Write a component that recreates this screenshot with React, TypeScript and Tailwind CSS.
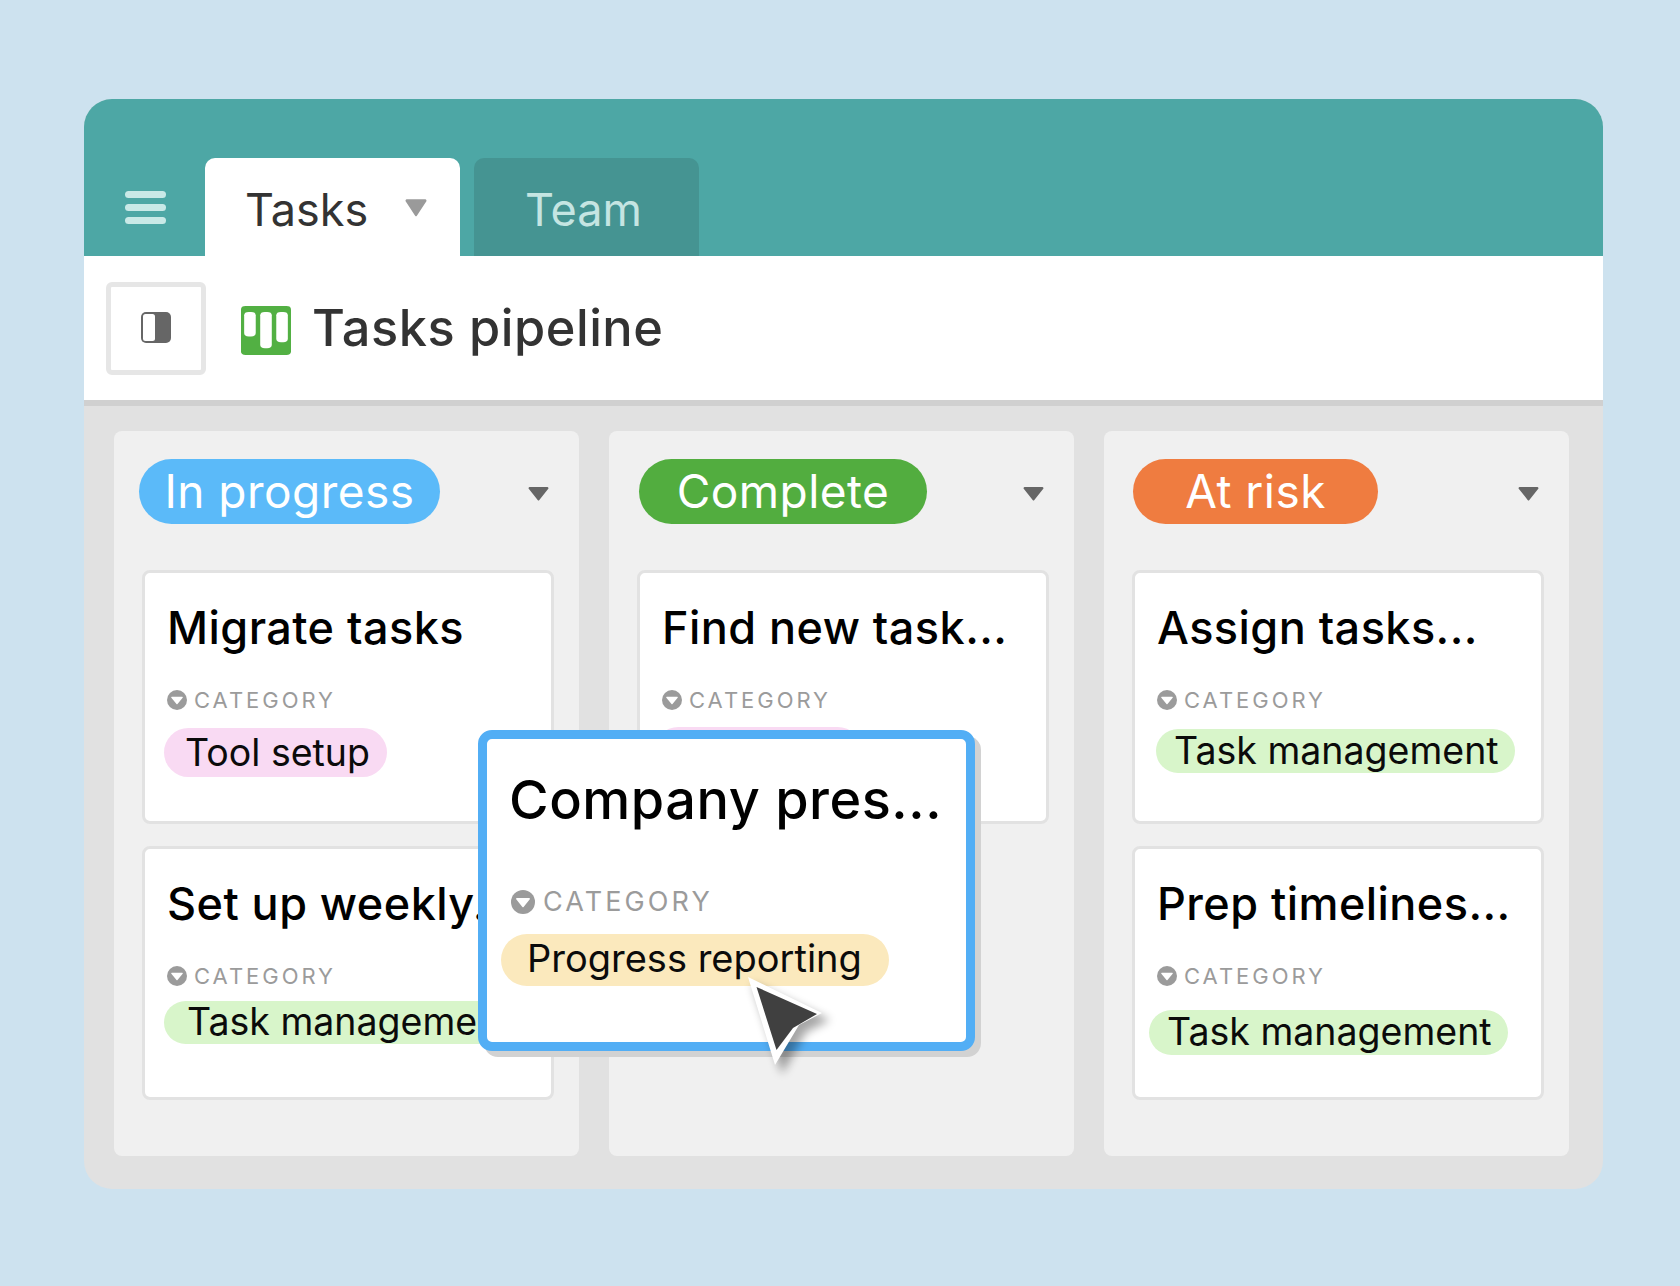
const font = { fontFamily: 'Inter, "Noto Sans", sans-serif' }

// ─── Small glyphs ────────────────────────────────────────────────
function Caret({ className }: { className: string }) {
  return (
    <svg viewBox="0 0 20 14" className={className} fill="currentColor" preserveAspectRatio="none">
      <path d="M1.5 1h17a1 1 0 0 1 .8 1.6L10.8 13a1 1 0 0 1-1.6 0L.7 2.6A1 1 0 0 1 1.5 1z" />
    </svg>
  )
}

function CategoryLabel({ large }: { large?: boolean }) {
  return (
    <div className={large ? 'ml-[2px] flex items-center gap-[8px]' : 'flex items-center gap-[7px]'}>
      <svg viewBox="0 0 24 24" className={large ? 'h-6 w-6 shrink-0' : 'h-5 w-5 shrink-0'}>
        <circle cx="12" cy="12" r="12" fill="#9b9b9b" />
        <path d="M5.8 8h12.4a.8.8 0 0 1 .6 1.3l-6.2 7.6a.8.8 0 0 1-1.2 0L5.2 9.3A.8.8 0 0 1 5.8 8z" fill="#fff" />
      </svg>
      <span className={large ? 'text-[27px] leading-none tracking-[0.115em] text-[#9b9b9b]' : 'text-[22px] leading-none tracking-[0.135em] text-[#9b9b9b]'}>
        CATEGORY
      </span>
    </div>
  )
}

// ─── Task card ───────────────────────────────────────────────────
function TaskCard({ title, tag, tagClass }: { title: string; tag?: string; tagClass: string }) {
  return (
    <div className="h-[254px] rounded-[8px] border-[3px] border-[#e2e2e2] bg-white pl-[22px] pt-[30px]">
      <div className="text-[45px] font-medium leading-[50px] tracking-[0.01em] text-black whitespace-nowrap">{title}</div>
      <div className="mt-[36px]">
        <CategoryLabel />
      </div>
      <div className={`inline-flex items-center whitespace-nowrap rounded-full text-[37.5px] text-[#0b0b0b] ${tagClass}`}>{tag}</div>
    </div>
  )
}

// ─── Column ──────────────────────────────────────────────────────
function Column({
  label,
  pillClass,
  children,
}: {
  label: string
  pillClass: string
  children: React.ReactNode
}) {
  return (
    <div className="h-[725px] w-[465px] rounded-[8px] bg-[#f0f0f0] pl-[29px] pr-[26px] pt-[28px]">
      <div className="flex h-[65px] items-center justify-between">
        <div className={`flex h-[65px] items-center justify-center rounded-full text-[46px] tracking-[0.01em] text-white ${pillClass}`}>{label}</div>
        <Caret className="mr-[4px] mt-[4px] h-[15px] w-[21px] text-[#666666]" />
      </div>
      <div className="-mx-[1px] mt-[46px] flex flex-col gap-[22px]">{children}</div>
    </div>
  )
}

export default function App() {
  return (
    <div className="h-[1286px] w-[1680px] bg-[#cde2ef] pl-[84px] pt-[99px]" style={font}>
      <div className="relative flex h-[1090px] w-[1519px] flex-col rounded-[28px] bg-[#e1e1e1]">
        {/* ─── Tab bar ──────────────────────────────────────── */}
        <div className="flex h-[157px] items-end rounded-t-[28px] bg-[#4da7a5] pl-[41px]">
          <div className="mb-[32px] flex w-[80px] flex-col gap-[6px]">
            <div className="h-[7px] w-[41px] rounded-full bg-[#c9e9e7]" />
            <div className="h-[7px] w-[41px] rounded-full bg-[#c9e9e7]" />
            <div className="h-[7px] w-[41px] rounded-full bg-[#c9e9e7]" />
          </div>
          <div className="flex h-[98px] w-[255px] items-center rounded-t-[10px] bg-white pl-[40px]">
            <span className="pt-[6px] text-[45px] text-[#333333]">Tasks</span>
            <Caret className="ml-[37px] mt-[1px] h-[19px] w-[22px] text-[#9a9a9a]" />
          </div>
          <div className="ml-[14px] flex h-[98px] w-[225px] items-center rounded-t-[10px] bg-[#459492] pl-[51px]">
            <span className="pt-[6px] text-[45px] text-[#c5e5e2]">Team</span>
          </div>
        </div>

        {/* ─── Toolbar ──────────────────────────────────────── */}
        <div className="flex h-[150px] items-center border-b-[6px] border-[#d0d0d0] bg-white pl-[22px]">
          <div className="flex h-[93px] w-[100px] items-center justify-center rounded-[6px] border-[5px] border-[#e6e6e6]">
            <svg viewBox="0 0 24 32" className="mr-[1px] h-[32px] w-[24px]" style={{ overflow: 'visible' }}>
              <rect x="-3" y="0" width="30" height="31" rx="5" fill="#666666" />
              <rect x="-1" y="2" width="12" height="27" rx="2.5" fill="#fff" />
            </svg>
          </div>
          <svg viewBox="0 0 38 50" className="ml-[35px] mt-[4px] h-[49px] w-[50px]" preserveAspectRatio="none">
            <rect width="38" height="50" rx="3.5" fill="#52b043" />
            <rect x="2.4" y="6" width="8.8" height="25" rx="3.5" fill="#fff" />
            <rect x="14.6" y="6" width="8.8" height="37" rx="3.5" fill="#fff" />
            <rect x="26.8" y="6" width="8.8" height="31" rx="3.5" fill="#fff" />
          </svg>
          <span className="ml-[21px] text-[50.5px] font-medium tracking-[0.01em] text-[#333333]">Tasks pipeline</span>
        </div>

        {/* ─── Board ────────────────────────────────────────── */}
        <div className="flex gap-[30px] pl-[30px] pt-[25px]">
          <Column label="In progress" pillClass="w-[301px] -ml-[4px] bg-[#5bbaf9]">
            <TaskCard title="Migrate tasks" tag="Tool setup" tagClass="mt-[17px] -ml-[3px] h-[49px] w-[223px] bg-[#f9daf3] pl-[21px] pt-[1px]" />
            <TaskCard title="Set up weekly..." tag="Task management" tagClass="mt-[14px] -ml-[3px] h-[43px] w-[340px] bg-[#d8f5ca] pl-[23px]" />
          </Column>
          <Column label="Complete" pillClass="w-[288px] bg-[#52ad3f] ml-[1px]">
            <TaskCard title="Find new task..." tagClass="mt-[16px] -ml-[8px] h-[49px] w-[208px] bg-[#f9daf3] pl-[20px]" />
          </Column>
          <Column label="At risk" pillClass="w-[245px] bg-[#ef7c40]">
            <TaskCard title="Assign tasks..." tag="Task management" tagClass="mt-[18px] -ml-[1px] h-[44px] w-[359px] bg-[#d8f5ca] pl-[18px]" />
            <TaskCard title="Prep timelines..." tag="Task management" tagClass="mt-[23px] -ml-[8px] h-[45px] w-[359px] bg-[#d8f5ca] pl-[18px]" />
          </Column>
        </div>

        {/* ─── Dragged card ─────────────────────────────────── */}
        <div className="absolute left-[394px] top-[631px] h-[321px] w-[497px] rounded-[14px] border-[9px] border-[#52aef5] bg-white pl-[22px] pt-[31px] shadow-[6px_6px_0_0_#d2d2d2]">
          <div className="text-[54px] font-medium leading-[60px] tracking-[0.01em] text-black whitespace-nowrap">Company pres...</div>
          <div className="mt-[58px]">
            <CategoryLabel large />
          </div>
          <div className="-ml-[8px] mt-[19px] flex h-[52px] w-[388px] items-center rounded-full bg-[#fbe9bd] pb-[4px] pl-[26px] text-[38px] text-[#0b0b0b] whitespace-nowrap">
            Progress reporting
          </div>
        </div>

        {/* ─── Cursor ───────────────────────────────────────── */}
        <svg viewBox="0 0 90 100" className="absolute left-[660px] top-[869px] h-[100px] w-[90px]" style={{ overflow: 'visible' }}>
          <path d="M8 15 L86 52 L62 64 L38 106 Z" fill="#000" opacity="0.35" style={{ filter: 'blur(5px)' }} />
          <path d="M4 9 L78 45 L55 57 L31 97 Z" fill="#fff" />
          <path d="M12.5 19 L73 46 L49 60 L32.5 82 Z" fill="#404040" />
        </svg>
      </div>
    </div>
  )
}
